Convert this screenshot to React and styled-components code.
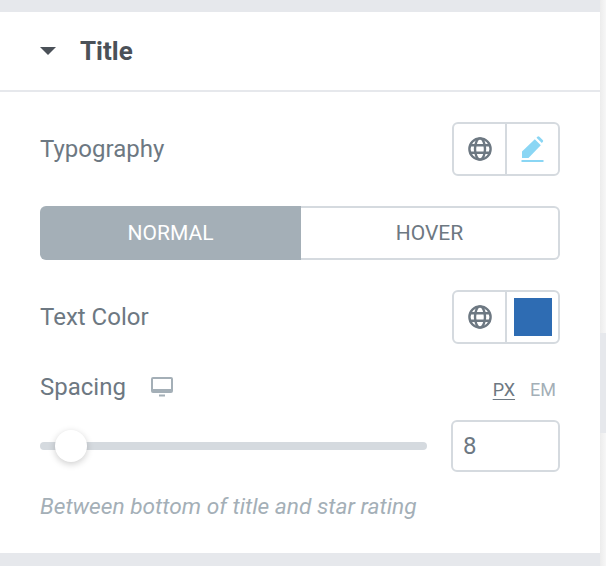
import React from 'react'
import styled, { createGlobalStyle } from 'styled-components'

const GlobalStyle = createGlobalStyle`
  html, body {
    margin: 0;
    padding: 0;
    background: #e6e8ec;
    font-family: Roboto, "Liberation Sans", sans-serif;
  }
`

const Page = styled.div`
  width: 606px;
  height: 566px;
  display: flex;
  overflow: hidden;
`

const Main = styled.main`
  width: 600px;
  padding: 12px 0 13px;
  box-sizing: border-box;
`

const ScrollTrack = styled.div`
  width: 6px;
  padding-top: 333px;
  box-sizing: border-box;
  background: linear-gradient(90deg, #ececec, #f7f7f7);
`

const ScrollThumb = styled.div`
  height: 100px;
  background: #e6e8ec;
`

const Panel = styled.section`
  background: #fff;
  height: 541px;
`

const Header = styled.header`
  height: 78px;
  box-sizing: content-box;
  display: flex;
  align-items: center;
  padding-left: 40px;
  border-bottom: 2px solid #e6e8ec;
`

const Caret = styled.span`
  width: 0;
  height: 0;
  border-left: 8px solid transparent;
  border-right: 8px solid transparent;
  border-top: 8px solid #4b5158;
  margin-right: 24px;
`

const Heading = styled.h2`
  margin: 0;
  font-size: 26px;
  font-weight: 700;
  line-height: 28px;
  color: #4b5158;
`

const Body = styled.div`
  padding: 30px 40px 0;
  display: flex;
  flex-direction: column;
`

const Row = styled.div`
  display: flex;
  align-items: center;
  justify-content: space-between;
  margin-bottom: ${(p) => p.$gap || 30}px;
`

const Label = styled.span`
  font-size: 24px;
  line-height: 28px;
  color: #6d7882;
`

const Group = styled.div`
  width: 108px;
  height: 54px;
  box-sizing: border-box;
  display: flex;
  border: 2px solid #d5dadf;
  border-radius: 6px;
`

const GroupCell = styled.div`
  flex: 1;
  display: flex;
  align-items: center;
  justify-content: center;
  & + & {
    border-left: 2px solid #d5dadf;
  }
`

const Swatch = styled.span`
  width: 38px;
  height: 38px;
  background: #2e6cb3;
`

const Switch = styled.div`
  display: flex;
  height: 54px;
  box-sizing: border-box;
  margin-bottom: 30px;
`

const SwitchButton = styled.div`
  flex: ${(p) => (p.$active ? '0 0 261px' : '1')};
  display: flex;
  align-items: center;
  justify-content: center;
  font-size: 21px;
  box-sizing: border-box;
  color: ${(p) => (p.$active ? '#fff' : '#6d7882')};
  background: ${(p) => (p.$active ? '#a4afb7' : '#fff')};
  border: ${(p) => (p.$active ? '0' : '2px solid #d5dadf')};
  border-left: 0;
  border-radius: ${(p) => (p.$active ? '6px 0 0 6px' : '0 6px 6px 0')};
`

const SpacingHead = styled.div`
  display: flex;
  align-items: center;
  height: 28px;
  margin-bottom: 19px;
`

const DeviceIcon = styled.svg`
  margin-left: 25px;
`

const Units = styled.div`
  margin-left: auto;
  margin-right: 4px;
  display: flex;
  gap: 15px;
  font-size: 18px;
  line-height: 22px;
  position: relative;
  top: 3px;
`

const Unit = styled.span`
  color: ${(p) => (p.$active ? '#6d7882' : '#a4afb7')};
  text-decoration: ${(p) => (p.$active ? 'underline' : 'none')};
  text-underline-offset: 3px;
`

const SliderRow = styled.div`
  display: flex;
  align-items: center;
  justify-content: space-between;
  margin-bottom: 21px;
`

const Track = styled.div`
  position: relative;
  width: 387px;
  height: 8px;
  border-radius: 4px;
  background: #d5dadf;
`

const Thumb = styled.span`
  position: absolute;
  left: 15px;
  top: -12px;
  width: 32px;
  height: 32px;
  border-radius: 50%;
  background: #fff;
  box-shadow: 0 2px 7px rgba(0, 0, 0, 0.2);
`

const NumberBox = styled.div`
  width: 109px;
  height: 52px;
  box-sizing: border-box;
  display: flex;
  align-items: center;
  padding-left: 10px;
  border: 2px solid #d5dadf;
  border-radius: 6px;
  font-size: 24px;
  color: #6d7882;
`

const Description = styled.p`
  margin: 0;
  font-size: 22.7px;
  line-height: 28px;
  font-style: italic;
  color: #a4afb7;
`

const GlobeIcon = () => (
  <svg width="24" height="24" viewBox="0 0 24 24" fill="none" stroke="#6d7882" strokeWidth="2.4">
    <circle cx="12" cy="12" r="10.6" />
    <ellipse cx="12" cy="12" rx="5" ry="10.6" />
    <path d="M2.5 8.2h19M2.5 15.8h19" />
  </svg>
)

const PencilIcon = () => (
  <svg width="24" height="26" viewBox="0 0 24 26">
    <path d="M1 22v-6.5L13.8 3.2l6 6L7.5 22z" fill="#8ad6f4" />
    <path d="M15.5 1.8l.9-1a1.5 1.5 0 0 1 2 0l3.3 3.2a1.5 1.5 0 0 1 0 2.1l-.9.9z" fill="#8ad6f4" />
    <rect x="0.5" y="24" width="22" height="2" fill="#8ad6f4" />
  </svg>
)

const App = () => {
  return (
    <>
      <GlobalStyle />
      <Page>
        <Main>
          <Panel>
            <Header>
              <Caret />
              <Heading>Title</Heading>
            </Header>
            <Body>
              <Row>
                <Label>Typography</Label>
                <Group>
                  <GroupCell><GlobeIcon /></GroupCell>
                  <GroupCell><PencilIcon /></GroupCell>
                </Group>
              </Row>
              <Switch>
                <SwitchButton $active>NORMAL</SwitchButton>
                <SwitchButton>HOVER</SwitchButton>
              </Switch>
              <Row $gap={29}>
                <Label>Text Color</Label>
                <Group>
                  <GroupCell><GlobeIcon /></GroupCell>
                  <GroupCell><Swatch /></GroupCell>
                </Group>
              </Row>
              <SpacingHead>
                <Label>Spacing</Label>
                <DeviceIcon width="22" height="20" viewBox="0 0 22 20">
                  <path
                    fillRule="evenodd"
                    d="M2 0h18a2 2 0 0 1 2 2v12a2 2 0 0 1-2 2H2a2 2 0 0 1-2-2V2a2 2 0 0 1 2-2zm0 2v10h18V2z"
                    fill="#a4afb7"
                  />
                  <rect x="8" y="17.5" width="6" height="2" fill="#a4afb7" />
                </DeviceIcon>
                <Units>
                  <Unit $active>PX</Unit>
                  <Unit>EM</Unit>
                </Units>
              </SpacingHead>
              <SliderRow>
                <Track><Thumb /></Track>
                <NumberBox>8</NumberBox>
              </SliderRow>
              <Description>Between bottom of title and star rating</Description>
            </Body>
          </Panel>
        </Main>
        <ScrollTrack>
          <ScrollThumb />
        </ScrollTrack>
      </Page>
    </>
  )
}

export default App
